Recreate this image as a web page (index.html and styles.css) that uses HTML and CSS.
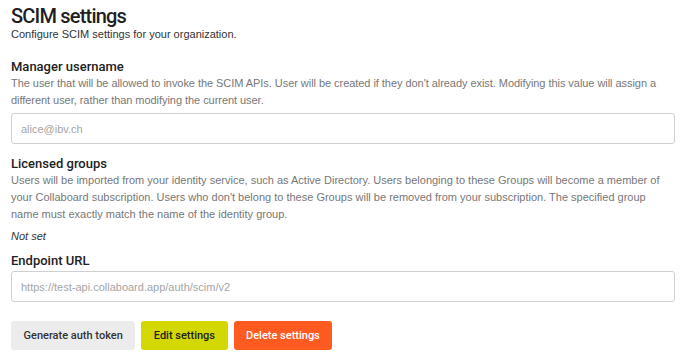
FILE: index.html
```html
<!DOCTYPE html>
<html lang="en">
<head>
    <meta charset="UTF-8">
    <meta name="viewport" content="width=device-width, initial-scale=1.0">
    <title>SCIM settings</title>

    <link rel="stylesheet" href="styles.css">
</head>
<body>
    <div class="page">
        <header>
            <h1>SCIM settings</h1>
            <p class="sub">Configure SCIM settings for your organization.</p>
        </header>

        <div class="field first">
            <h2>Manager username</h2>
            <p class="desc">The user that will be allowed to invoke the SCIM APIs. User will be created if they don't already exist. Modifying this value will assign a different user, rather than modifying the current user.</p>
            <input type="text" placeholder="alice@ibv.ch">
        </div>

        <div class="field">
            <h2>Licensed groups</h2>
            <p class="desc">Users will be imported from your identity service, such as Active Directory. Users belonging to these Groups will become a member of your Collaboard subscription. Users who don't belong to these Groups will be removed from your subscription. The specified group name must exactly match the name of the identity group.</p>
            <p class="empty">Not set</p>
        </div>

        <div class="field last">
            <h2>Endpoint URL</h2>
            <input type="text" placeholder="https://test-api.collaboard.app/auth/scim/v2">
        </div>

        <div class="actions">
            <button class="btn btn-gray" type="button">Generate auth token</button>
            <button class="btn btn-lime" type="button">Edit settings</button>
            <button class="btn btn-red" type="button">Delete settings</button>
        </div>
    </div>
</body>
</html>
```

FILE: styles.css
```css
*{
    margin: 0;
    padding: 0;
    box-sizing: border-box;
    font-family: 'Liberation Sans', Arial, sans-serif;
}
body{
    background: #fff;
    color: #222;
}
.page{
    padding: 5px 13px 0 11px;
}
header h1{
    font-family: Roboto, 'Liberation Sans', sans-serif;
    font-size: 20px;
    line-height: 22px;
    font-weight: 500;
    letter-spacing: -0.8px;
    color: #1f1f1f;
}
header .sub{
    font-size: 11px;
    line-height: 16px;
    margin-top: -1px;
    color: #333;
}
.field{
    margin-top: 11px;
}
.field.first{
    margin-top: 16px;
}
.field.last{
    margin-top: 7px;
}
.field h2{
    font-family: Roboto, 'Liberation Sans', sans-serif;
    font-size: 13px;
    line-height: 17px;
    font-weight: 500;
    color: #222;
}
.field .desc{
    font-size: 11px;
    line-height: 17px;
    color: #777;
}
.field.first .desc{
    letter-spacing: -0.05px;
}
.field .empty{
    font-size: 11px;
    line-height: 17px;
    font-style: italic;
    color: #333;
    margin-top: 5px;
}
.field input{
    display: block;
    width: 100%;
    height: 31px;
    margin-top: 4px;
    padding: 0 9px;
    border: 1px solid #d0d0d0;
    border-radius: 3px;
    outline: none;
    font-size: 11px;
    color: #333;
}
.field.last input{
    margin-top: 2px;
}
.field input::placeholder{
    color: #a5a5a5;
}
.actions{
    display: flex;
    gap: 6px;
    margin-top: 19px;
}
.btn{
    height: 29px;
    padding: 0 12.5px;
    border: none;
    border-radius: 3px;
    font-family: Roboto, 'Liberation Sans', sans-serif;
    font-size: 11px;
    font-weight: 500;
    cursor: pointer;
}
.btn-gray{
    background: #ececec;
    color: #333;
}
.btn-lime{
    background: #d2d800;
    color: #222;
}
.btn-red{
    background: #ff5a1f;
    color: #fff;
}
```
